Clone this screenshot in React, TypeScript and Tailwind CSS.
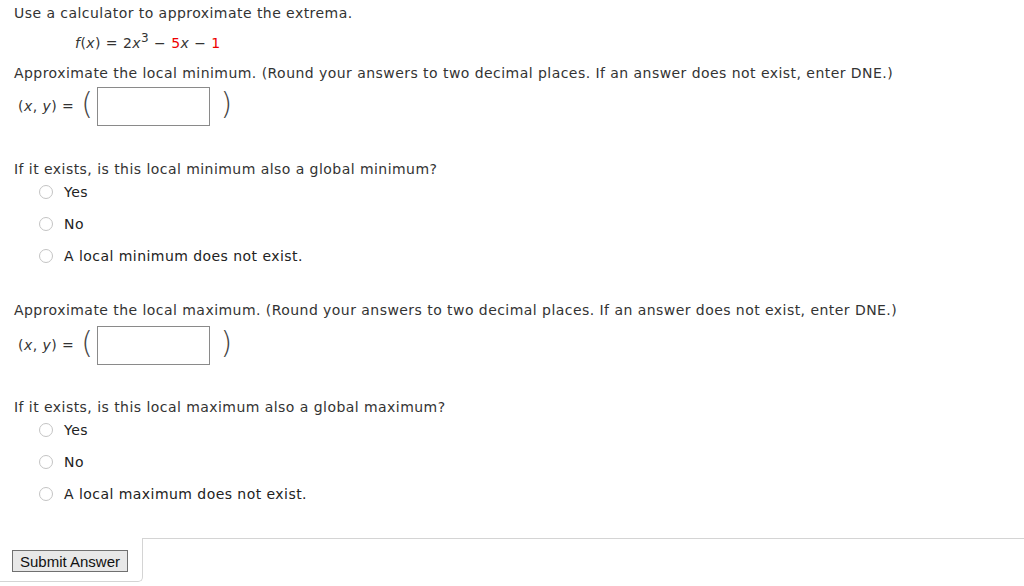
import React from 'react';

const verdana = { fontFamily: '"DejaVu Sans", Verdana, sans-serif', letterSpacing: '0.45px' };
const arial = { fontFamily: '"Liberation Sans", Arial, sans-serif', letterSpacing: 'normal' };

function Radio({ label }: { label: string }) {
    return (
        <label className="flex items-center h-[32px] pl-[39px] cursor-pointer">
            <span className="w-[14px] h-[14px] rounded-full border border-[#c4c4c4] bg-white" />
            <span className="ml-[11px] text-[14px] text-[#222]">{label}</span>
        </label>
    );
}

function PointInput() {
    return (
        <div className="flex items-center pl-[18px] h-[40px]">
            <span className="text-[14px] text-[#333]">
                (<i>x</i>, <i>y</i>) =
            </span>
            <span className="ml-[7px] text-[30px] font-extralight leading-none text-[#444] -mt-[4px]">(</span>
            <input
                type="text"
                className="ml-[4px] w-[113px] h-[39px] border border-[#8a8a8a] bg-white outline-none"
            />
            <span className="ml-[10px] text-[30px] font-extralight leading-none text-[#444] -mt-[4px]">)</span>
        </div>
    );
}

export default function App() {
    return (
        <div className="w-[1024px] h-[586px] bg-white text-[#333] text-[14px] overflow-hidden" style={verdana}>
            <div className="px-[14px] pt-[3px]">
                <p className="h-[20px] leading-[20px]">Use a calculator to approximate the extrema.</p>
                <p className="mt-[10px] pl-[61px] h-[20px] leading-[20px]">
                    <i>f</i>(<i>x</i>) = 2<i>x</i><sup className="text-[12px]">3</sup> − <span className="text-[#e00]">5</span><i>x</i> − <span className="text-[#e00]">1</span>
                </p>
                <p className="mt-[10px] h-[20px] leading-[20px]">
                    Approximate the local minimum. (Round your answers to two decimal places. If an answer does not exist, enter DNE.)
                </p>
            </div>

            <div className="mt-[3px]">
                <PointInput />
            </div>

            <p className="mt-[33px] px-[14px] h-[20px] leading-[20px]">If it exists, is this local minimum also a global minimum?</p>
            <div className="-mt-[3px]">
                <Radio label="Yes" />
                <Radio label="No" />
                <Radio label="A local minimum does not exist." />
            </div>

            <p className="mt-[28px] px-[14px] h-[20px] leading-[20px]">
                Approximate the local maximum. (Round your answers to two decimal places. If an answer does not exist, enter DNE.)
            </p>
            <div className="mt-[5px]">
                <PointInput />
            </div>

            <p className="mt-[32px] px-[14px] h-[20px] leading-[20px]">If it exists, is this local maximum also a global maximum?</p>
            <div className="-mt-[3px]">
                <Radio label="Yes" />
                <Radio label="No" />
                <Radio label="A local maximum does not exist." />
            </div>

            <div className="mt-[28px] flex">
                <div className="w-[143px] h-[44px] border-r border-b border-[#d4d4d4] rounded-br-[5px] pt-[12px] pl-[12px]">
                    <button
                        className="h-[22px] px-[7px] border border-[#707070] bg-[#e8e8e8] text-[15px] text-[#111] leading-none"
                        style={arial}
                    >
                        Submit Answer
                    </button>
                </div>
                <div className="flex-1 border-t border-[#d4d4d4]" />
            </div>
        </div>
    );
}
